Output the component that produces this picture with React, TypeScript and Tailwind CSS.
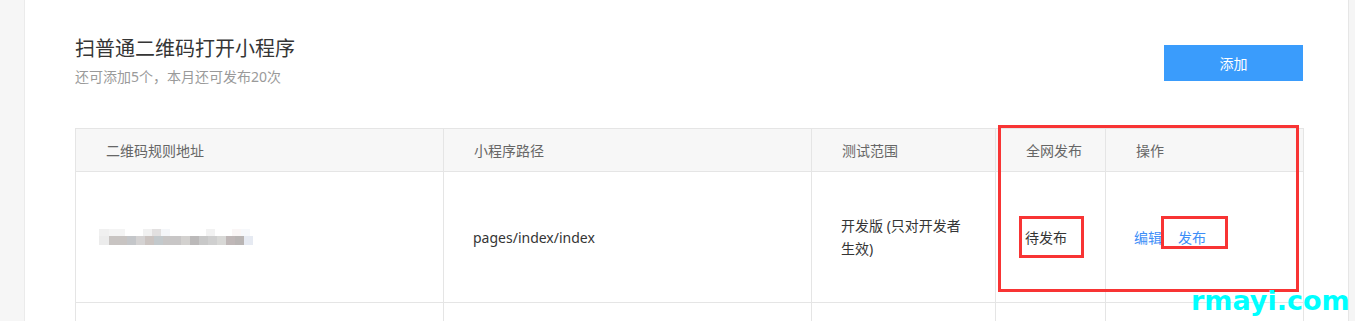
import React from "react";

const font = { fontFamily: '"Noto Sans", "Noto Sans CJK SC", sans-serif' };

export default function App() {
  return (
    <div className="relative flex h-[321px] w-[1355px] overflow-hidden bg-[#f5f5f5]" style={font}>
      <div className="w-[25px] border-r border-[#ebebeb] bg-[#f6f6f6]" />
      <div className="w-[1324px] border-r border-[#e6e6e6] bg-white pl-[50px] pt-[35px]">
        <div className="flex w-[1228px] items-start justify-between">
          <div>
            <div className="text-[20px] leading-[28px] text-[#353535]">扫普通二维码打开小程序</div>
            <div className="mt-[4px] text-[14px] leading-[19px] text-[#9a9a9a]">还可添加5个，本月还可发布20次</div>
          </div>
          <button className="mt-[10px] h-[36px] w-[139px] bg-[#3a9cfc] text-[14px] text-white">添加</button>
        </div>
        <table className="mt-[42px] w-[1228px] table-fixed border-collapse text-[14px]">
          <colgroup>
            <col className="w-[368px]" />
            <col className="w-[368px]" />
            <col className="w-[184px]" />
            <col className="w-[110px]" />
            <col className="w-[198px]" />
          </colgroup>
          <thead>
            <tr className="h-[43px] bg-[#f7f7f7] text-left text-[#666]">
              <th className="border border-[#e5e5e5] pl-[30px] font-normal">二维码规则地址</th>
              <th className="border border-[#e5e5e5] pl-[30px] font-normal">小程序路径</th>
              <th className="border border-[#e5e5e5] pl-[30px] font-normal">测试范围</th>
              <th className="border border-[#e5e5e5] pl-[30px] font-normal">全网发布</th>
              <th className="border border-[#e5e5e5] pl-[30px] font-normal">操作</th>
            </tr>
          </thead>
          <tbody className="text-[#353535]">
            <tr className="h-[131px]">
              <td className="border border-[#e5e5e5] pl-[23px]">
                <div className="flex flex-col blur-[0.6px]">
                  <div className="flex h-[7px]">
                    <div className="w-[10px] bg-[#f0f0f0]" />
                    <div className="w-[16px] bg-[#f4f4f4]" />
                    <div className="w-[18px] bg-white" />
                    <div className="w-[9px] bg-[#f1f1f1]" />
                    <div className="w-[9px] bg-[#e2e0e0]" />
                    <div className="w-[9px] bg-[#f4f6f9]" />
                    <div className="w-[36px] bg-white" />
                    <div className="w-[9px] bg-[#f2f2f2]" />
                    <div className="w-[17px] bg-white" />
                    <div className="w-[9px] bg-[#faf6f6]" />
                    <div className="w-[9px] bg-[#f6f8fb]" />
                  </div>
                  <div className="flex h-[9px]">
                    <div className="w-[10px] bg-[#ececec]" />
                    <div className="w-[18px] bg-[#c8c4c2]" />
                    <div className="w-[9px] bg-[#c4c6c9]" />
                    <div className="w-[9px] bg-[#d4d2d2]" />
                    <div className="w-[9px] bg-[#cbc4c1]" />
                    <div className="w-[9px] bg-[#c3c9cc]" />
                    <div className="w-[18px] bg-[#c8c6c6]" />
                    <div className="w-[9px] bg-[#d3d1cf]" />
                    <div className="w-[9px] bg-[#bbb9b9]" />
                    <div className="w-[9px] bg-[#c8c8c8]" />
                    <div className="w-[9px] bg-[#cfcfcf]" />
                    <div className="w-[9px] bg-[#d8d8d6]" />
                    <div className="w-[9px] bg-[#bfb7b7]" />
                    <div className="w-[9px] bg-[#b9b5b4]" />
                    <div className="w-[9px] bg-[#e6eaf2]" />
                  </div>
                </div>
              </td>
              <td className="border border-[#e5e5e5] pl-[29px]">pages/index/index</td>
              <td className="border border-[#e5e5e5] pl-[29px] pr-[28px] leading-[23px]">开发版 (只对开发者生效)</td>
              <td className="border border-[#e5e5e5] pl-[29px]">待发布</td>
              <td className="border border-[#e5e5e5] pl-[28px]">
                <span className="text-[#3e8ef7]">编辑</span>
                <span className="ml-[16px] text-[#3e8ef7]">发布</span>
              </td>
            </tr>
            <tr className="h-[40px]">
              <td className="border border-[#e5e5e5]" />
              <td className="border border-[#e5e5e5]" />
              <td className="border border-[#e5e5e5]" />
              <td className="border border-[#e5e5e5]" />
              <td className="border border-[#e5e5e5]" />
            </tr>
          </tbody>
        </table>
      </div>
      <div className="pointer-events-none absolute left-[998px] top-[125px] h-[167px] w-[301px] border-[3px] border-[#f83434]" />
      <div className="pointer-events-none absolute left-[1019px] top-[216px] h-[42px] w-[65px] border-[3px] border-[#f83434]" />
      <div className="pointer-events-none absolute left-[1161px] top-[216px] h-[33px] w-[67px] border-[3px] border-[#f83434]" />
      <div
        className="pointer-events-none absolute left-[1191px] top-[283px] text-[27px] font-bold leading-[36px] text-[#00ffff]"
        style={{ fontFamily: '"DejaVu Sans", sans-serif' }}
      >
        rmayi.com
      </div>
    </div>
  );
}
